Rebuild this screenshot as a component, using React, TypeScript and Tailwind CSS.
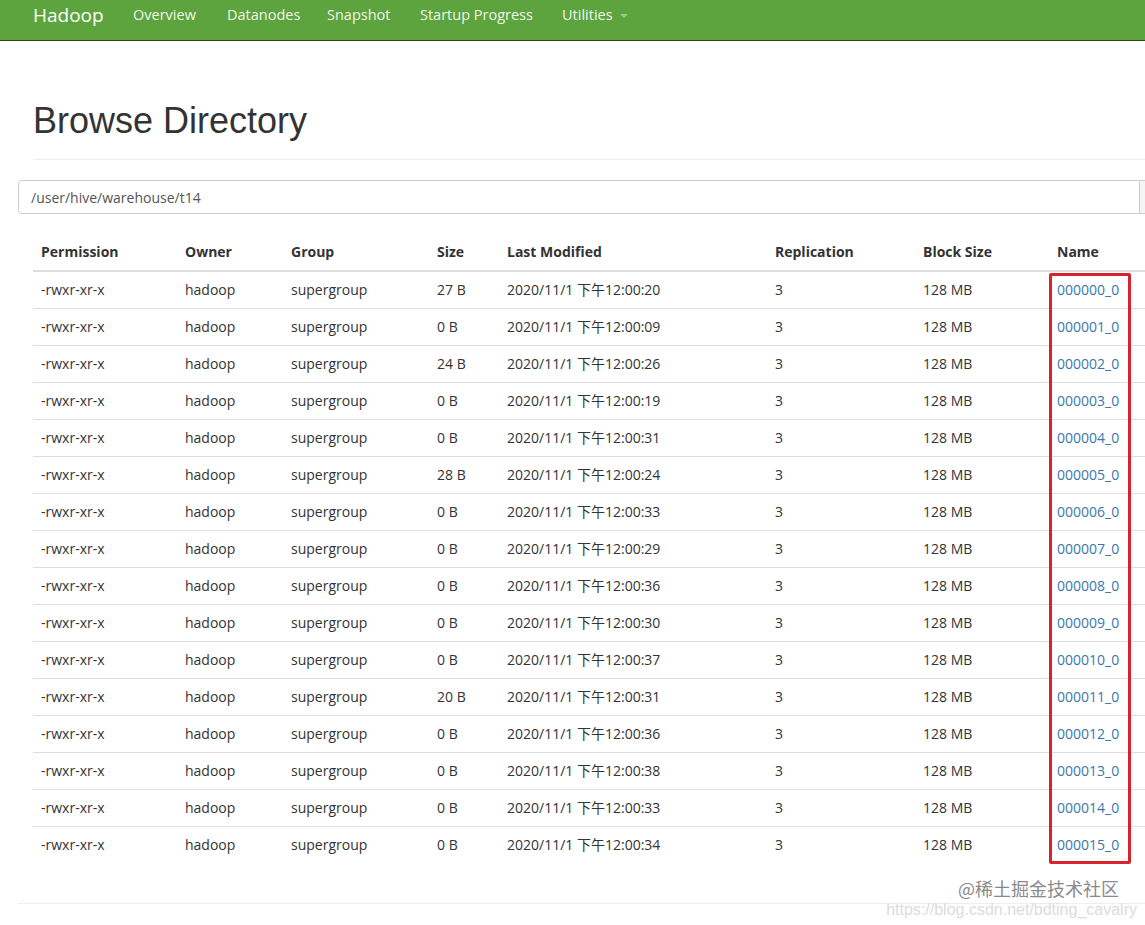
import React from "react";

const times = ["20", "09", "26", "19", "31", "24", "33", "29", "36", "30", "37", "31", "36", "38", "33", "34"];
const sizes = ["27 B", "0 B", "24 B", "0 B", "0 B", "28 B", "0 B", "0 B", "0 B", "0 B", "0 B", "20 B", "0 B", "0 B", "0 B", "0 B"];

const files = times.map((t, i) => ({
  perm: "-rwxr-xr-x",
  owner: "hadoop",
  group: "supergroup",
  size: sizes[i],
  modified: `2020/11/1 下午12:00:${t}`,
  replication: "3",
  blockSize: "128 MB",
  name: `0000${String(i).padStart(2, "0")}_0`,
}));

const navItems = [
  { label: "Overview", w: "w-[94px]" },
  { label: "Datanodes", w: "w-[100px]" },
  { label: "Snapshot", w: "w-[93px]" },
  { label: "Startup Progress", w: "w-[142px]" },
];

const font = { fontFamily: '"Open Sans", "Noto Sans CJK SC", sans-serif' };

export default function App() {
  return (
    <div className="min-h-screen w-full overflow-hidden bg-white text-[#333]" style={font}>
      <nav className="flex h-[41px] items-start border-b border-[#2f4a22] bg-[#5da33e] pl-[18px]">
        <a className="w-[100px] shrink-0 px-[15px] pt-[3px] text-[19px] leading-[24px] text-white">Hadoop</a>
        {navItems.map((n) => (
          <a key={n.label} className={`${n.w} shrink-0 whitespace-nowrap px-[15px] pt-[5px] text-[14.5px] leading-[20px] text-[#eef7e9]`}>
            {n.label}
          </a>
        ))}
        <a className="flex shrink-0 items-center gap-[7px] whitespace-nowrap px-[15px] pt-[5px] text-[14.5px] leading-[20px] text-[#eef7e9]">
          Utilities
          <span className="mt-[2px] inline-block h-0 w-0 border-x-[4px] border-t-[4px] border-x-transparent border-t-[#9cc88a]" />
        </a>
      </nav>

      <div className="w-[1200px] pl-[18px]">
        <div className="ml-[15px] mt-[60px] border-b border-[#eee] pb-[18px]">
          <h1 className="text-[36px] leading-[40px] text-[#333]" style={{ fontFamily: '"Liberation Sans", Arial, sans-serif' }}>
            Browse Directory
          </h1>
        </div>

        <div className="mt-[20px] flex">
          <div className="flex h-[34px] w-[1122px] items-center rounded-l-[4px] border border-[#ccc] px-[12px] text-[14px] text-[#555]">
            /user/hive/warehouse/t14
          </div>
          <div className="h-[34px] w-[60px] border border-l-0 border-[#ccc] bg-[#f5f5f5]" />
        </div>

        <div className="relative ml-[15px] mt-[19px]">
          <table className="table-fixed border-collapse text-left text-[14px]">
            <colgroup>
              <col className="w-[144px]" />
              <col className="w-[106px]" />
              <col className="w-[146px]" />
              <col className="w-[70px]" />
              <col className="w-[268px]" />
              <col className="w-[148px]" />
              <col className="w-[134px]" />
              <col className="w-[140px]" />
            </colgroup>
            <thead>
              <tr className="border-b-2 border-[#ddd]">
                {["Permission", "Owner", "Group", "Size", "Last Modified", "Replication", "Block Size", "Name"].map((h) => (
                  <th key={h} className="h-[38px] whitespace-nowrap px-[8px] align-middle font-bold">
                    {h}
                  </th>
                ))}
              </tr>
            </thead>
            <tbody>
              {files.map((f, i) => (
                <tr key={f.name} className={i === 0 ? "" : "border-t border-[#ddd]"}>
                  <td className="h-[37px] whitespace-nowrap px-[8px]">{f.perm}</td>
                  <td className="whitespace-nowrap px-[8px]">{f.owner}</td>
                  <td className="whitespace-nowrap px-[8px]">{f.group}</td>
                  <td className="whitespace-nowrap px-[8px]">{f.size}</td>
                  <td className="whitespace-nowrap px-[8px]">{f.modified}</td>
                  <td className="whitespace-nowrap px-[8px]">{f.replication}</td>
                  <td className="whitespace-nowrap px-[8px]">{f.blockSize}</td>
                  <td className="whitespace-nowrap px-[8px]">
                    <a className="text-[#3a76ae]">{f.name}</a>
                  </td>
                </tr>
              ))}
            </tbody>
          </table>
          <div className="pointer-events-none absolute left-[1016px] top-[40px] h-[591px] w-[82px] rounded-[2px] border-[3px] border-[#d8232f]" />
        </div>

        <div className="relative mt-[40px] w-[1127px] border-t border-[#eee]">
          <div className="absolute right-[26px] top-[-27px] text-[18px] leading-[22px] text-[#8a8a8a]" style={{ fontFamily: '"Noto Sans CJK SC", sans-serif' }}>
            @稀土掘金技术社区
          </div>
          <div className="absolute right-[8px] top-[-3px] whitespace-nowrap text-[16px] leading-[18px] text-[#dcdcdc]" style={{ fontFamily: '"Liberation Sans", Arial, sans-serif' }}>
            https://blog.csdn.net/bdting_cavalry
          </div>
        </div>
        <div className="h-[40px]" />
      </div>
    </div>
  );
}
